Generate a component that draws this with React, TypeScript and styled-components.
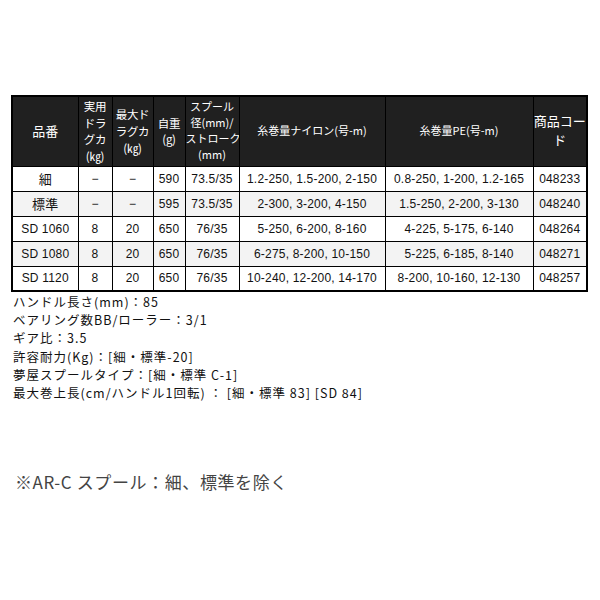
import React from "react";
import styled, { createGlobalStyle } from "styled-components";

const Global = createGlobalStyle`
  html, body { margin: 0; padding: 0; background: #fff; }
  body { font-family: "Liberation Sans", "Noto Sans CJK JP", sans-serif; color: #111; }
`;

const Page = styled.div`
  width: 600px;
  height: 600px;
  box-sizing: border-box;
  padding: 95px 0 0 11px;
  display: flex;
  flex-direction: column;
`;

const Table = styled.table`
  width: 575px;
  table-layout: fixed;
  border-collapse: collapse;
  border: 2px solid #000;
  font-family: "Liberation Sans", "Noto Sans CJK JP", sans-serif;
  font-size: 12px;
`;

const HeadRow = styled.tr`
  height: 70px;
`;

const HeadCell = styled.th<{ $size?: "small" | "narrow" }>`
  background: #202020;
  color: #fff;
  font-weight: normal;
  border: 1px solid #000;
  padding: 0;
  text-align: center;
  vertical-align: middle;
  font-family: "Noto Sans CJK JP", "Liberation Sans", sans-serif;
  font-size: ${(p) => (p.$size === "small" ? "11px" : p.$size === "narrow" ? "11.5px" : "13px")};
  letter-spacing: ${(p) => (p.$size === "narrow" ? "-0.3px" : "0")};
  line-height: 1.45;
  white-space: nowrap;
  overflow: hidden;
`;

const Row = styled.tr<{ $alt?: boolean }>`
  height: 25px;
  background: ${(p) => (p.$alt ? "#f3f3f3" : "#fff")};
`;

const Cell = styled.td<{ $cjk?: boolean }>`
  border: 1px solid #000;
  padding: 0;
  text-align: center;
  vertical-align: middle;
  white-space: nowrap;
  font-size: ${(p) => (p.$cjk ? "13px" : "12px")};
  font-family: ${(p) =>
    p.$cjk
      ? `"Noto Sans CJK JP", sans-serif`
      : `"Liberation Sans", "Noto Sans CJK JP", sans-serif`};
  color: #111;
  letter-spacing: 0.2px;
`;

const Notes = styled.div`
  margin-top: 1px;
  padding-left: 2px;
  font-family: "Noto Sans CJK JP", "Liberation Sans", sans-serif;
  font-size: 12.5px;
  line-height: 18.2px;
  letter-spacing: 1px;
  color: #111;
`;

const NoteLine = styled.div`
  white-space: nowrap;
`;

const Footnote = styled.div`
  margin-top: 67px;
  padding-left: 4px;
  font-family: "Noto Sans CJK JP", sans-serif;
  font-size: 17px;
  line-height: 25px;
  color: #444;
  letter-spacing: 0.6px;
`;

const widths = [66, 34, 41, 32, 54, 146, 148, 54];

type RowData = {
  name: string;
  drag: string;
  max: string;
  weight: string;
  spool: string;
  nylon: string;
  pe: string;
  code: string;
};

const rows: RowData[] = [
  { name: "細", drag: "−", max: "−", weight: "590", spool: "73.5/35", nylon: "1.2-250, 1.5-200, 2-150", pe: "0.8-250, 1-200, 1.2-165", code: "048233" },
  { name: "標準", drag: "−", max: "−", weight: "595", spool: "73.5/35", nylon: "2-300, 3-200, 4-150", pe: "1.5-250, 2-200, 3-130", code: "048240" },
  { name: "SD 1060", drag: "8", max: "20", weight: "650", spool: "76/35", nylon: "5-250, 6-200, 8-160", pe: "4-225, 5-175, 6-140", code: "048264" },
  { name: "SD 1080", drag: "8", max: "20", weight: "650", spool: "76/35", nylon: "6-275, 8-200, 10-150", pe: "5-225, 6-185, 8-140", code: "048271" },
  { name: "SD 1120", drag: "8", max: "20", weight: "650", spool: "76/35", nylon: "10-240, 12-200, 14-170", pe: "8-200, 10-160, 12-130", code: "048257" },
];

const isCjk = (s: string) => /[^\x00-\x7f]/.test(s) && !/[0-9]/.test(s);

export default function App() {
  return (
    <>
      <Global />
      <Page>
        <Table>
          <colgroup>
            {widths.map((w, i) => (
              <col key={i} style={{ width: w }} />
            ))}
          </colgroup>
          <thead>
            <HeadRow>
              <HeadCell>品番</HeadCell>
              <HeadCell $size="narrow">
                実用<br />ドラ<br />グカ<br />(㎏)
              </HeadCell>
              <HeadCell $size="narrow">
                最大ド<br />ラグカ<br />(㎏)
              </HeadCell>
              <HeadCell $size="narrow">
                自重<br />(g)
              </HeadCell>
              <HeadCell $size="small">
                スプール<br />径(mm)/<br />ストローク<br />(mm)
              </HeadCell>
              <HeadCell $size="small">糸巻量ナイロン(号-m)</HeadCell>
              <HeadCell $size="small">糸巻量PE(号-m)</HeadCell>
              <HeadCell>
                商品コー<br />ド
              </HeadCell>
            </HeadRow>
          </thead>
          <tbody>
            {rows.map((r, i) => (
              <Row key={r.code} $alt={i % 2 === 1}>
                <Cell $cjk={isCjk(r.name)}>{r.name}</Cell>
                <Cell>{r.drag}</Cell>
                <Cell>{r.max}</Cell>
                <Cell>{r.weight}</Cell>
                <Cell>{r.spool}</Cell>
                <Cell>{r.nylon}</Cell>
                <Cell>{r.pe}</Cell>
                <Cell>{r.code}</Cell>
              </Row>
            ))}
          </tbody>
        </Table>
        <Notes>
          <NoteLine>ハンドル長さ(mm)：85</NoteLine>
          <NoteLine>ベアリング数BB/ローラー：3/1</NoteLine>
          <NoteLine>ギア比：3.5</NoteLine>
          <NoteLine>許容耐力(Kg)：[細・標準-20]</NoteLine>
          <NoteLine>夢屋スプールタイプ：[細・標準 C-1]</NoteLine>
          <NoteLine>最大巻上長(cm/ハンドル1回転) ： [細・標準 83] [SD 84]</NoteLine>
        </Notes>
        <Footnote>※AR-C スプール：細、標準を除く</Footnote>
      </Page>
    </>
  );
}
